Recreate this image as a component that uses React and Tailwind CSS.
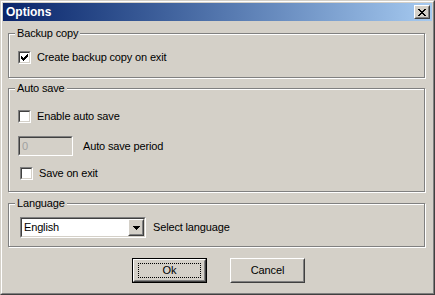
const px = (cells) =>
  cells.map(([x, y, w = 1]) => `M${x} ${y}h${w}v1h-${w}z`).join("");

const checkPath = px([
  [6, 0], [5, 1, 2], [0, 2], [4, 2, 3], [0, 3, 2], [3, 3, 3], [0, 4, 5], [1, 5, 3], [2, 6],
]);

const closePath = px([
  [0, 0, 2], [6, 0, 2], [1, 1, 2], [5, 1, 2], [2, 2, 4], [3, 3, 2], [2, 4, 4], [1, 5, 2], [5, 5, 2], [0, 6, 2], [6, 6, 2],
]);

const arrowPath = px([[0, 0, 7], [1, 1, 5], [2, 2, 3], [3, 3]]);

const Checkbox = ({ checked }) => (
  <span className="block w-[13px] h-[13px] shrink-0 border border-t-[#808080] border-l-[#808080] border-r-white border-b-white">
    <span className="block w-full h-full bg-white border border-t-[#404040] border-l-[#404040] border-r-[#d4d0c8] border-b-[#d4d0c8]">
      {checked && (
        <svg width="9" height="9" viewBox="-1 -1 9 9" shapeRendering="crispEdges" className="block">
          <path d={checkPath} fill="#000" />
        </svg>
      )}
    </span>
  </span>
);

const Raised = ({ className = "", children }) => (
  <div className={`border border-t-white border-l-white border-r-[#404040] border-b-[#404040] ${className}`}>
    <div className="w-full h-full border border-t-[#d4d0c8] border-l-[#d4d0c8] border-r-[#808080] border-b-[#808080] flex items-center justify-center">
      {children}
    </div>
  </div>
);

const Sunken = ({ className = "", inner = "", children }) => (
  <div className={`border border-t-[#808080] border-l-[#808080] border-r-white border-b-white ${className}`}>
    <div className={`w-full h-full border border-t-[#404040] border-l-[#404040] border-r-[#d4d0c8] border-b-[#d4d0c8] ${inner}`}>
      {children}
    </div>
  </div>
);

const Group = ({ label, className = "", children }) => (
  <div
    className={`relative ml-[5px] w-[417px] border border-[#808080] shadow-[inset_1px_1px_0_#fff,1px_1px_0_#fff] pl-[9px] ${className}`}
  >
    <span className="absolute -top-[7px] left-[6px] bg-[#d4d0c8] px-[2px] leading-[13px]">{label}</span>
    {children}
  </div>
);

export default function App() {
  return (
    <div className="w-[435px] h-[295px] bg-[#d4d0c8] font-['Liberation_Sans',Arial,sans-serif] text-[11px] text-black border border-t-[#d4d0c8] border-l-[#d4d0c8] border-r-[#404040] border-b-[#404040]">
      <div className="w-full h-full border border-t-white border-l-white border-r-[#808080] border-b-[#808080] p-[1px]">
        {/* title bar */}
        <div className="h-[18px] flex items-center justify-between bg-gradient-to-r from-[#0a246a] to-[#a6caf0] pl-[3px] pr-[2px]">
          <span className="text-white font-bold text-[12px] leading-[18px]">Options</span>
          <Raised className="w-[16px] h-[14px] bg-[#d4d0c8]">
            <svg width="8" height="7" viewBox="0 0 8 7" shapeRendering="crispEdges" className="block">
              <path d={closePath} fill="#000" />
            </svg>
          </Raised>
        </div>

        <div className="tracking-[-0.15px]">
          <Group label="Backup copy" className="mt-[12px] h-[45px] pt-[17px]">
            <label className="flex items-center gap-[6px] leading-[13px]">
              <Checkbox checked />
              <span>Create backup copy on exit</span>
            </label>
          </Group>

          <Group label="Auto save" className="mt-[10px] h-[104px] pt-[21px]">
            <label className="flex items-center gap-[6px] leading-[13px]">
              <Checkbox />
              <span>Enable auto save</span>
            </label>
            <div className="mt-[13px] flex items-center">
              <Sunken className="w-[55px] h-[20px]" inner="bg-[#d4d0c8] pl-[2px] leading-[16px] text-[#a0a0a0]">
                0
              </Sunken>
              <span className="ml-[10px]">Auto save period</span>
            </div>
            <label className="mt-[11px] ml-[2px] flex items-center gap-[6px] leading-[13px]">
              <Checkbox />
              <span>Save on exit</span>
            </label>
          </Group>

          <Group label="Language" className="mt-[11px] h-[44px] pt-[13px]">
            <div className="ml-[2px] flex items-center">
              <Sunken className="w-[126px] h-[21px]" inner="bg-white flex items-center justify-between">
                <span className="pl-[2px] leading-[17px]">English</span>
                <Raised className="w-[16px] h-[17px] bg-[#d4d0c8] border-t-[#d4d0c8] border-l-[#d4d0c8]">
                  <svg width="7" height="4" viewBox="0 0 7 4" shapeRendering="crispEdges" className="block">
                    <path d={arrowPath} fill="#000" />
                  </svg>
                </Raised>
              </Sunken>
              <span className="ml-[7px]">Select language</span>
            </div>
          </Group>

          <div className="mt-[11px] pl-[2px] flex justify-center gap-[23px]">
            <div className="w-[75px] h-[25px] border border-black">
              <Raised className="w-full h-full">
                <span className="w-[63px] h-[15px] flex items-center justify-center border border-dotted border-black">Ok</span>
              </Raised>
            </div>
            <Raised className="w-[75px] h-[25px]">
              <span>Cancel</span>
            </Raised>
          </div>
        </div>
      </div>
    </div>
  );
}
